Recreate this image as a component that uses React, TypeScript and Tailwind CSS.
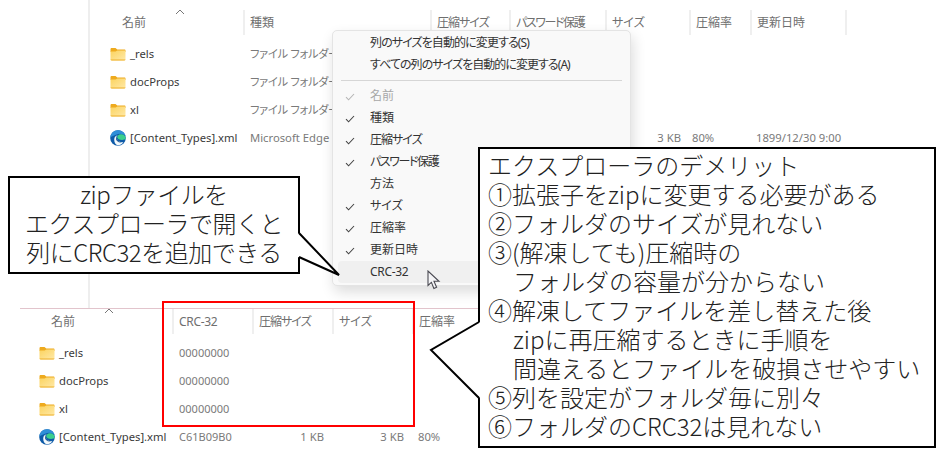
import React from "react";

const ui = "font-['Noto_Sans','Noto_Sans_CJK_JP',sans-serif] [font-feature-settings:'palt']";
const big = "font-['Noto_Sans_CJK_JP','Noto_Sans',sans-serif] font-light [font-feature-settings:normal] text-[24px] leading-[29px] text-[#222]";
const small = "text-[11.25px] text-[#7a7a7a]";

function Folder() {
  return (
    <svg width="16" height="14" viewBox="0 0 16 14" className="shrink-0">
      <defs>
        <linearGradient id="fg" x1="0" y1="0" x2="1" y2="1">
          <stop offset="0" stopColor="#fbd35f" />
          <stop offset="1" stopColor="#ffe9a8" />
        </linearGradient>
      </defs>
      <path d="M0.5 2.2C0.5 1.3 1 1 1.8 1H5.5L7.3 2.6H14.4C15.2 2.6 15.5 3 15.5 3.8V5H0.5Z" fill="#eeaa1e" />
      <path d="M0.5 4.6L5.6 4.6L7.3 3.6H14.5C15.2 3.6 15.5 4 15.5 4.7V12.2C15.5 13 15 13.4 14.3 13.4H1.7C1 13.4 0.5 13 0.5 12.2Z" fill="url(#fg)" />
      <path d="M0.5 12.6C0.7 13.2 1.1 13.4 1.7 13.4H14.3C14.9 13.4 15.3 13.2 15.5 12.6Z" fill="#eeb02c" />
    </svg>
  );
}

function Edge() {
  return (
    <svg width="16" height="16" viewBox="0 0 16 16" className="shrink-0">
      <circle cx="8" cy="8" r="7.8" fill="#0d5aa8" />
      <path d="M0.3 7.2C0.8 3 4 0.2 8 0.2C11.8 0.2 15 2.7 15.7 6.2C13 3.6 9.8 3.2 6.8 4.4C3.8 5.4 1.8 6.8 0.3 7.2Z" fill="#2f8fd8" />
      <path d="M15.8 8.6C15.8 6 13.6 4 10.8 4.2C8.6 4.4 7.2 5.7 7.2 7.1C7.2 8.9 9.6 10 12 10C14 10 15.4 9.6 15.8 8.6Z" fill="#3bcf8d" />
      <path d="M4.2 9.4C4.2 7 6 5.4 7.6 5.2C6.6 6.4 6.4 8 7.2 9.6C8.2 11.6 10.6 12.6 13.4 12.2C12 14 9.8 15.4 7.6 15.2C5.4 14.6 4.2 12 4.2 9.4Z" fill="#f2f8fb" />
      <path d="M6 8.6C6 6.8 6.8 5.9 7.6 5.2C6.6 6.4 6.4 8 7.2 9.6C8 11.2 9.6 12.2 11.8 12.4C9 13 6 11.4 6 8.6Z" fill="#0a4a8e" />
    </svg>
  );
}

function Caret() {
  return (
    <svg width="10" height="6" viewBox="0 0 10 6" className="absolute">
      <path d="M1 5L5 1L9 5" fill="none" stroke="#777" strokeWidth="1" />
    </svg>
  );
}

function Check({ dim }: { dim?: boolean }) {
  return (
    <svg width="10" height="8" viewBox="0 0 10 8" className="absolute left-[7px] top-[8px]">
      <path d="M1 4.2L3.6 6.8L9 1" fill="none" stroke={dim ? "#b5b5b5" : "#444"} strokeWidth="1.1" />
    </svg>
  );
}

function HeadCell({ label, first, tr = "" }: { label: string; first?: boolean; tr?: string }) {
  return (
    <div className={"h-[25px] flex items-center " + (first ? "" : "border-l-2 border-[#efefef] pl-[5px]")}>
      <span className={"text-[12px] text-[#6f6f6f] whitespace-nowrap " + tr}>{label}</span>
    </div>
  );
}

function Name({ kind, text }: { kind: "folder" | "edge"; text: string }) {
  return (
    <div className="flex items-center gap-[4px] whitespace-nowrap text-[#3a3a3a] text-[11.25px]">
      {kind === "folder" ? <Folder /> : <Edge />}
      <span>{text}</span>
    </div>
  );
}

const menuItems: { label: string; check?: boolean; dim?: boolean; hover?: boolean; tr?: string }[] = [
  { label: "名前", check: true, dim: true },
  { label: "種類", check: true },
  { label: "圧縮サイズ", check: true, tr: "tracking-[-1px]" },
  { label: "パスワード保護", check: true, tr: "tracking-[-1.4px]" },
  { label: "方法" },
  { label: "サイズ", check: true },
  { label: "圧縮率", check: true },
  { label: "更新日時", check: true },
  { label: "CRC-32", hover: true, tr: "tracking-[-0.3px]" },
];

const topRows: [string, "folder" | "edge", string][] = [
  ["_rels", "folder", "ファイル フォルダー"],
  ["docProps", "folder", "ファイル フォルダー"],
  ["xl", "folder", "ファイル フォルダー"],
  ["[Content_Types].xml", "edge", "Microsoft Edge"],
];

export default function App() {
  return (
    <div className={"relative w-[942px] h-[452px] overflow-hidden bg-white " + ui}>
      {/* Top explorer window */}
      <div className="relative ml-[88px] h-[308px] w-[854px] border-l-2 border-[#eeeeee] pt-[10px]">
        <div className="grid grid-cols-[153px_187px_79px_96px_84px_61px_95px_1fr]">
          <div className="relative pl-[32px]">
            <HeadCell first label="名前" />
            <div className="absolute left-[85px] top-[-1px]"><Caret /></div>
          </div>
          <HeadCell label="種類" />
          <HeadCell label="圧縮サイズ" tr="tracking-[-1px]" />
          <HeadCell label="パスワード保護" tr="tracking-[-1.4px]" />
          <HeadCell label="サイズ" />
          <HeadCell label="圧縮率" />
          <HeadCell label="更新日時" />
          <div className="border-l-2 border-[#efefef] h-[25px]" />
        </div>
        <div className="mt-[5px] flex flex-col">
          {topRows.map(([n, k, t], i) => (
            <div key={n} className="grid grid-cols-[153px_187px_79px_96px_84px_61px_95px_1fr] h-[28px] items-center">
              <div className="pl-[20px]"><Name kind={k} text={n} /></div>
              <div className={"pl-[7px] whitespace-nowrap " + small + (i === 3 ? "" : " tracking-[-0.3px]")}>{t}</div>
              <div />
              <div />
              <div className={"text-right pr-[8px] " + small}>{i === 3 ? "3 KB" : ""}</div>
              <div className={"pl-[3px] " + small}>{i === 3 ? "80%" : ""}</div>
              <div className={"pl-[6px] whitespace-nowrap " + small}>{i === 3 ? "1899/12/30 9:00" : ""}</div>
              <div />
            </div>
          ))}
        </div>
      </div>

      {/* Bottom explorer window */}
      <div className="ml-[20px] w-[460px] border-t border-[#e2c4cc]">
        <div className="grid grid-cols-[152px_80px_80px_80px_63px]">
          <div className="relative pl-[31px]">
            <HeadCell first label="名前" />
            <div className="absolute left-[84px] top-[-1px]"><Caret /></div>
          </div>
          <HeadCell label="CRC-32" tr="tracking-[-0.3px]" />
          <HeadCell label="圧縮サイズ" tr="tracking-[-1px]" />
          <HeadCell label="サイズ" />
          <HeadCell label="圧縮率" />
        </div>
        <div className="mt-[5px] flex flex-col">
          {topRows.map(([n, k], i) => (
            <div key={n} className="grid grid-cols-[152px_80px_80px_80px_63px] h-[28px] items-center">
              <div className="pl-[19px]"><Name kind={k} text={n} /></div>
              <div className={"pl-[7px] text-[11px] text-[#7a7a7a]"}>{i === 3 ? "C61B09B0" : "00000000"}</div>
              <div className={"text-right pr-[8px] " + small}>{i === 3 ? "1 KB" : ""}</div>
              <div className={"text-right pr-[8px] " + small}>{i === 3 ? "3 KB" : ""}</div>
              <div className={"pl-[6px] " + small}>{i === 3 ? "80%" : ""}</div>
            </div>
          ))}
        </div>
      </div>

      {/* Context menu */}
      <div className="absolute left-[332px] top-[30px] w-[299px] rounded-[5px] border border-[#e4e4e4] bg-[#f9f9f9] px-[5px] pt-px pb-[2px] shadow-[2px_6px_14px_rgba(0,0,0,0.14)] text-[12px] text-[#333]">
        <div className="h-[22px] pl-[32px] flex items-center tracking-[-0.9px]">列のサイズを自動的に変更する(S)</div>
        <div className="h-[22px] pl-[32px] flex items-center tracking-[-0.95px]">すべての列のサイズを自動的に変更する(A)</div>
        <div className="mt-[4px] mb-[4px] mx-[3px] h-px bg-[#d6d6d6]" />
        {menuItems.map((m) => (
          <div
            key={m.label}
            className={"relative h-[22px] pl-[32px] flex items-center rounded-[4px] " + (m.hover ? "bg-[#f0f0f0] " : "") + (m.dim ? "text-[#a8a8a8] " : "") + (m.tr ?? "")}
          >
            {m.check && <Check dim={m.dim} />}
            {m.label}
          </div>
        ))}
      </div>

      {/* Mouse cursor */}
      <svg width="14" height="20" viewBox="0 0 14 20" className="absolute left-[427px] top-[270px]">
        <path d="M1 1V15.5L4.4 12.4L6.9 18.4L9.6 17.2L7 11.3H12Z" fill="#f4f4f6" stroke="#4a4a52" strokeWidth="1.1" />
      </svg>

      {/* Red highlight */}
      <div className="absolute left-[162px] top-[301px] w-[253px] h-[126px] border-[2.5px] border-[#ff0000]" />

      {/* Left callout */}
      <div className={"absolute left-[8px] top-[176px] w-[292px] h-[98px] border-2 border-black bg-white flex flex-col items-center justify-center pb-[5px] text-center whitespace-nowrap tracking-[-0.5px] " + big}>
        <div>zipファイルを</div>
        <div>エクスプローラで開くと</div>
        <div>列にCRC32を追加できる</div>
      </div>
      <svg width="44" height="48" viewBox="0 0 44 48" className="absolute left-[297px] top-[230px]">
        <path d="M1 3L42 45L1 27Z" fill="#fff" />
        <path d="M2 3L42 45L2 27" fill="none" stroke="#000" strokeWidth="2" />
      </svg>

      {/* Right callout */}
      <div className={"absolute left-[478px] top-[147px] w-[458px] h-[301px] border-2 border-black bg-white pl-[8px] pt-px whitespace-nowrap " + big}>
        <div>エクスプローラのデメリット</div>
        <div>①拡張子をzipに変更する必要がある</div>
        <div>②フォルダのサイズが見れない</div>
        <div>③(解凍しても)圧縮時の</div>
        <div className="pl-[25px]">フォルダの容量が分からない</div>
        <div>④解凍してファイルを差し替えた後</div>
        <div className="pl-[25px]">zipに再圧縮するときに手順を</div>
        <div className="pl-[25px]">間違えるとファイルを破損させやすい</div>
        <div>⑤列を設定がフォルダ毎に別々</div>
        <div>⑥フォルダのCRC32は見れない</div>
      </div>
      <svg width="52" height="80" viewBox="0 0 52 80" className="absolute left-[429px] top-[320px]">
        <path d="M51 2L2 30L51 78Z" fill="#fff" />
        <path d="M50 2L2 30L50 78" fill="none" stroke="#000" strokeWidth="2" />
      </svg>
    </div>
  );
}
